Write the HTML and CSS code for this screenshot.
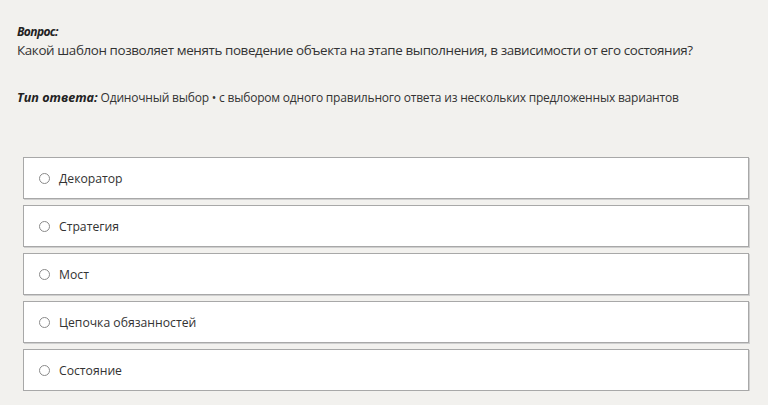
FILE: index.html
```html
<!DOCTYPE html>
<html lang="ru">
<head>
<meta charset="utf-8">
<link rel="stylesheet" href="styles.css">
</head>
<body>
<div class="page">
  <div class="question">
    <div class="label">Вопрос:</div>
    <div class="qtext">Какой шаблон позволяет менять поведение объекта на этапе выполнения, в зависимости от его состояния?</div>
  </div>
  <div class="type"><span class="label">Тип ответа:</span> Одиночный выбор • с выбором одного правильного ответа из нескольких предложенных вариантов</div>
  <div class="options">
    <label class="option"><span class="radio"></span><span class="otext">Декоратор</span></label>
    <label class="option"><span class="radio"></span><span class="otext">Стратегия</span></label>
    <label class="option"><span class="radio"></span><span class="otext">Мост</span></label>
    <label class="option"><span class="radio"></span><span class="otext">Цепочка обязанностей</span></label>
    <label class="option"><span class="radio"></span><span class="otext">Состояние</span></label>
  </div>
</div>
</body>
</html>
```

FILE: styles.css
```css
html, body {
  margin: 0;
  padding: 0;
  background: #f2f1ee;
}
body {
  font-family: "Open Sans", "Noto Sans", sans-serif;
  color: #333;
  font-size: 12px;
}
.page {
  padding: 24px 19px 0 17px;
}
.label {
  font-weight: bold;
  font-style: italic;
  font-size: 12px;
  letter-spacing: -0.6px;
  color: #222;
}
.question .label {
  line-height: 16px;
}
.type .label {
  font-size: 12.6px;
  letter-spacing: 0;
}
.qtext {
  font-size: 13.4px;
  letter-spacing: -0.38px;
  line-height: 20px;
  white-space: nowrap;
}
.type {
  margin-top: 28px;
  line-height: 20px;
  font-size: 12px;
  letter-spacing: -0.2px;
  white-space: nowrap;
}
.options {
  margin: 49px 0 0 6px;
  display: flex;
  flex-direction: column;
  gap: 6px;
}
.option {
  display: flex;
  align-items: center;
  height: 40px;
  background: #fff;
  border: 1px solid #a8a8a8;
  box-shadow: 1px 1px 0 #cfcfcf;
  padding-left: 15px;
}
.radio {
  width: 9px;
  height: 9px;
  border: 1px solid #8a8a8a;
  border-radius: 50%;
  margin-right: 9px;
}
.otext {
  font-size: 12.2px;
}
```
